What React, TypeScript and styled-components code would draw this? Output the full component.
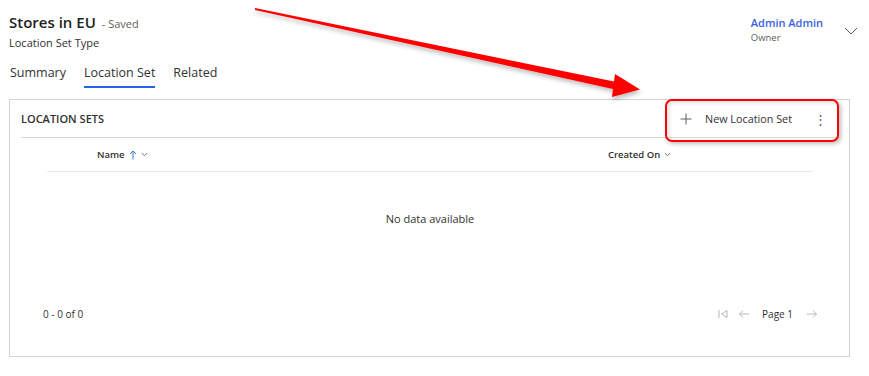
import React from "react";
import styled, { createGlobalStyle } from "styled-components";

const GlobalStyle = createGlobalStyle`
  body {
    margin: 0;
    background: #fff;
    font-family: "Segoe UI", "Open Sans", sans-serif;
    color: #323130;
  }
`;

const Page = styled.div`
  position: relative;
  width: 869px;
  height: 376px;
  overflow: hidden;
`;

const Header = styled.div`
  display: flex;
  justify-content: space-between;
  align-items: flex-start;
  padding: 11px 11px 0 9px;
`;

const TitleLine = styled.div`
  display: flex;
  align-items: baseline;
  gap: 6px;
  line-height: 22px;
`;

const Title = styled.span`
  font-size: 15px;
  font-weight: 600;
  color: #201f1e;
`;

const SavedTag = styled.span`
  font-size: 11px;
  color: #605e5c;
`;

const Subtitle = styled.div`
  font-size: 11px;
  line-height: 16px;
  color: #323130;
`;

const Owner = styled.div`
  display: flex;
  align-items: flex-start;
  gap: 21px;
  padding-top: 4px;
`;

const OwnerText = styled.div`
  display: flex;
  flex-direction: column;
`;

const OwnerName = styled.span`
  font-size: 11px;
  font-weight: 600;
  line-height: 15px;
  color: #3b5fe0;
`;

const OwnerRole = styled.span`
  font-size: 9.5px;
  line-height: 15px;
  color: #605e5c;
`;

const Chevron = styled.svg`
  margin-top: 12px;
`;

const Tabs = styled.div`
  display: flex;
  gap: 18px;
  padding: 12px 0 0 10px;
`;

const Tab = styled.div<{ $active?: boolean }>`
  font-size: 12.5px;
  line-height: 20px;
  padding-bottom: 3px;
  color: #323130;
  border-bottom: 2px solid ${(p) => (p.$active ? "#2266e3" : "transparent")};
`;

const Panel = styled.div`
  margin: 11px 0 0 9px;
  width: 839px;
  height: 256px;
  border: 1px solid #d1d1d1;
  display: flex;
  flex-direction: column;
`;

const PanelHeader = styled.div`
  display: flex;
  justify-content: space-between;
  align-items: center;
  height: 37px;
  margin: 0 10px 0 11px;
  border-bottom: 1px solid #d8d8d8;
`;

const PanelTitle = styled.span`
  font-size: 11px;
  font-weight: 600;
  color: #323130;
`;

const CommandBar = styled.div`
  display: flex;
  align-items: center;
  padding-right: 12px;
`;

const CommandButton = styled.div`
  display: flex;
  align-items: center;
  gap: 13px;
  font-size: 10.8px;
  color: #323130;
`;

const More = styled.span`
  font-size: 13px;
  color: #605e5c;
  margin-left: 22px;
`;

const Grid = styled.div`
  margin: 0 36px 0 37px;
  display: flex;
  flex-direction: column;
`;

const GridHead = styled.div`
  display: grid;
  grid-template-columns: 511px 1fr;
  align-items: center;
  height: 33px;
  padding-left: 50px;
  border-bottom: 1px solid #edebe9;
`;

const ColHead = styled.div`
  display: flex;
  align-items: center;
  gap: 4px;
  font-size: 9.5px;
  font-weight: 600;
  color: #323130;
`;

const Empty = styled.div`
  display: flex;
  justify-content: center;
  align-items: center;
  height: 92px;
  font-size: 11px;
  color: #323130;
`;

const Footer = styled.div`
  display: flex;
  justify-content: space-between;
  align-items: center;
  height: 14px;
  margin: 43px 31px 0 33px;
  font-size: 10px;
  color: #323130;
`;

const Pager = styled.div`
  display: flex;
  align-items: center;
  gap: 10px;
`;

const PageLabel = styled.span`
  font-size: 10px;
  margin: 0 3px 0 2px;
`;

const Annotations = styled.svg`
  position: absolute;
  left: 0;
  top: 0;
  pointer-events: none;
`;

const Highlight = styled.div`
  position: absolute;
  left: 665px;
  top: 99px;
  width: 170px;
  height: 39px;
  border: 2px solid #f00;
  border-radius: 7px;
  box-shadow: 2px 2px 4px rgba(0, 0, 0, 0.25), inset 2px 2px 4px rgba(0, 0, 0, 0.12);
  pointer-events: none;
`;

const SmallChevron = () => (
  <svg width="7" height="5" viewBox="0 0 7 5">
    <path d="M0.8 1 L3.5 3.7 L6.2 1" fill="none" stroke="#605e5c" strokeWidth="0.9" />
  </svg>
);

export default function App() {
  return (
    <Page>
      <GlobalStyle />
      <Header>
        <div>
          <TitleLine>
            <Title>Stores in EU</Title>
            <SavedTag>- Saved</SavedTag>
          </TitleLine>
          <Subtitle>Location Set Type</Subtitle>
        </div>
        <Owner>
          <OwnerText>
            <OwnerName>Admin Admin</OwnerName>
            <OwnerRole>Owner</OwnerRole>
          </OwnerText>
          <Chevron width="14" height="8" viewBox="0 0 14 8">
            <path d="M1 1 L7 7 L13 1" fill="none" stroke="#605e5c" strokeWidth="1" />
          </Chevron>
        </Owner>
      </Header>

      <Tabs>
        <Tab>Summary</Tab>
        <Tab $active>Location Set</Tab>
        <Tab>Related</Tab>
      </Tabs>

      <Panel>
        <PanelHeader>
          <PanelTitle>LOCATION SETS</PanelTitle>
          <CommandBar>
            <CommandButton>
              <svg width="12" height="12" viewBox="0 0 12 12">
                <path d="M6 0.5 V11.5 M0.5 6 H11.5" stroke="#605e5c" strokeWidth="1" />
              </svg>
              New Location Set
            </CommandButton>
            <More>⋮</More>
          </CommandBar>
        </PanelHeader>

        <Grid>
          <GridHead>
            <ColHead>
              Name
              <svg width="8" height="10" viewBox="0 0 8 10">
                <path d="M4 9.5 V1 M1 4 L4 1 L7 4" fill="none" stroke="#2266e3" strokeWidth="0.9" />
              </svg>
              <SmallChevron />
            </ColHead>
            <ColHead>
              Created On
              <SmallChevron />
            </ColHead>
          </GridHead>
          <Empty>No data available</Empty>
        </Grid>

        <Footer>
          <span>0 - 0 of 0</span>
          <Pager>
            <svg width="10" height="10" viewBox="0 0 10 10">
              <path d="M1 1 V9 M9 1.5 L3.5 5 L9 8.5 Z" fill="none" stroke="#b3b0ad" strokeWidth="0.9" />
            </svg>
            <svg width="12" height="10" viewBox="0 0 12 10">
              <path d="M11 5 H1.5 M5 1.5 L1.5 5 L5 8.5" fill="none" stroke="#b3b0ad" strokeWidth="0.9" />
            </svg>
            <PageLabel>Page 1</PageLabel>
            <svg width="12" height="10" viewBox="0 0 12 10">
              <path d="M1 5 H10.5 M7 1.5 L10.5 5 L7 8.5" fill="none" stroke="#b3b0ad" strokeWidth="0.9" />
            </svg>
          </Pager>
        </Footer>
      </Panel>

      <Highlight />
      <Annotations width="869" height="376" viewBox="0 0 869 376">
        <defs>
          <filter id="shadow" x="-10%" y="-50%" width="120%" height="200%">
            <feDropShadow dx="1" dy="3" stdDeviation="2" floodColor="#000" floodOpacity="0.25" />
          </filter>
        </defs>
        <polygon
          points="255,8 614,81.5 615,74 640,89.5 612,97 613,89 255,10"
          fill="#ff0000"
          filter="url(#shadow)"
        />
      </Annotations>
    </Page>
  );
}
